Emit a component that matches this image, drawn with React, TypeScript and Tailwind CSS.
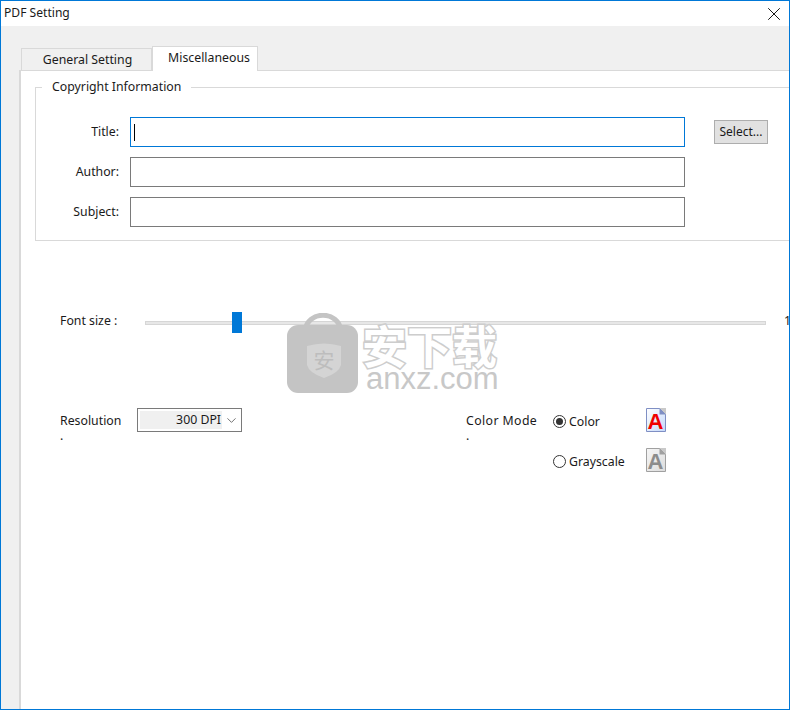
import { X, ChevronDown } from "lucide-react";

const uiFont = "font-['Noto_Sans','Noto_Sans_CJK_SC',sans-serif] text-[12.3px] text-[#1a1a1a]";

interface FieldRowProps {
  label: string;
  focused?: boolean;
}

function FieldRow({ label, focused }: FieldRowProps) {
  return (
    <div className="flex items-center">
      <span className="w-[73px] text-right">{label}</span>
      <div
        className={`ml-[11px] flex h-[30px] w-[555px] items-center border pl-[3px] ${
          focused ? "border-[#0078d7]" : "border-[#7a7a7a]"
        }`}
      >
        {focused && <div className="h-[17px] w-px bg-black" />}
      </div>
    </div>
  );
}

interface DocIconProps {
  id: string;
  color: string;
  border: string;
  from: string;
  to: string;
}

function DocIcon({ id, color, border, from, to }: DocIconProps) {
  return (
    <svg width="20" height="24" viewBox="0 0 20 24" className="shrink-0">
      <defs>
        <linearGradient id={id} x1="0" y1="0" x2="1" y2="1">
          <stop offset="0" stopColor={from} />
          <stop offset="1" stopColor={to} />
        </linearGradient>
      </defs>
      <rect x="13" y="0" width="7" height="7" fill="#c9c9c9" />
      <path d="M0.5 0.5H13.5L19.5 6.5V23.5H0.5Z" fill={`url(#${id})`} stroke={border} />
      <path d="M13.5 0.5V6.5H19.5Z" fill={border} />
      <text
        x="9.5"
        y="20.5"
        textAnchor="middle"
        fontSize="22"
        fontWeight="700"
        fontFamily="Liberation Sans, sans-serif"
        fill={color}
      >
        A
      </text>
    </svg>
  );
}

function Watermark() {
  return (
    <div className="pointer-events-none absolute left-[286px] top-[312px] flex">
      <svg width="71" height="80" viewBox="0 0 71 80" className="shrink-0">
        <path d="M18 18C20 -3 52 -3 54 18" fill="none" stroke="#c4c4c4" strokeWidth="5" />
        <rect x="0" y="12" width="71" height="68" rx="11" fill="#c4c4c4" />
        <path d="M20 33Q37 28 54 33V52Q52 60 37 65Q22 60 20 52Z" fill="#d4d4d4" />
        <text
          x="37"
          y="55"
          textAnchor="middle"
          fontSize="21"
          fontFamily="Noto Sans CJK SC, sans-serif"
          fill="#bdbdbd"
        >
          安
        </text>
      </svg>
      <div className="ml-[4px] flex flex-col items-start">
        <span className="mt-[8px] font-['Noto_Sans_CJK_SC',sans-serif] text-[45px] font-bold leading-[48px] text-white [-webkit-text-stroke:3px_#cdcdcd] [paint-order:stroke_fill]">
          安下载
        </span>
        <span className="ml-[4px] mt-[-6px] font-['Liberation_Sans',sans-serif] text-[31px] leading-[32px] text-[#c8c8c8]">
          anxz.com
        </span>
      </div>
    </div>
  );
}

export default function App() {
  return (
    <div className={`relative flex h-[710px] w-[790px] flex-col overflow-hidden border border-[#0078d7] bg-white ${uiFont}`}>
      <div className="flex h-[25px] shrink-0 items-center justify-between bg-white pl-[3px] pr-[4px]">
        <span className="text-[12.1px]">PDF Setting</span>
        <X size={22} strokeWidth={1} className="text-black" />
      </div>

      <div className="flex min-h-0 flex-1 flex-col bg-[#f0f0f0] pl-[18px]">
        <div className="flex h-[44px] shrink-0 items-end pl-[2px]">
          <div className="flex h-[22px] w-[131px] items-center justify-center border border-b-0 border-[#d9d9d9] bg-[#f0f0f0] pl-[2px] pt-[2px]">
            General Setting
          </div>
          <div className="z-10 mb-[-1px] flex h-[25px] w-[106px] items-center justify-center border border-b-0 border-[#d9d9d9] bg-white pb-[2px] pl-[8px]">
            Miscellaneous
          </div>
        </div>

        <div className="flex-1 border-l-2 border-t border-[#d9d9d9] bg-white pl-[14px] pt-[7px]">
          <fieldset className="mr-[-4px] h-[163px] border border-r-0 border-[#d9d9d9] pl-[6px]">
            <legend className="px-[10px] leading-[18px]">Copyright Information</legend>
            <div className="ml-[4px] flex">
              <div className="mt-[21px] flex flex-col gap-[10px]">
                <FieldRow label="Title:" focused />
                <FieldRow label="Author:" />
                <FieldRow label="Subject:" />
              </div>
              <button className="ml-[29px] mt-[24px] h-[24px] w-[54px] shrink-0 border border-[#adadad] bg-[#e1e1e1] text-[12px]">
                Select...
              </button>
            </div>
          </fieldset>

          <div className="mt-[71px] flex h-[22px] items-center pl-[25px]">
            <span className="w-[85px] shrink-0 pb-[4px]">Font size :</span>
            <div className="relative h-[4px] w-[621px] shrink-0 border border-[#d6d6d6] bg-[#e7e7e7]">
              <div className="absolute left-[86px] top-[-10px] h-[21px] w-[10px] bg-[#0078d7]" />
            </div>
            <span className="ml-[18px] shrink-0 pb-[4px]">1</span>
          </div>

          <div className="mt-[74px] flex items-start pl-[25px]">
            <span className="w-[70px] shrink-0 pt-[5px] leading-[15px]">
              Resolution
              <br />.
            </span>
            <div className="ml-[7px] flex h-[24px] w-[105px] shrink-0 items-center border border-[#7a7a7a] pl-[2px]">
              <span className="flex h-[18px] w-[82px] items-center justify-end bg-[#f0f0f0] pr-[1px]">300 DPI</span>
              <ChevronDown size={15} strokeWidth={1.1} className="ml-[2px] text-[#333]" />
            </div>

            <span className="ml-[224px] w-[87px] shrink-0 pt-[5px] leading-[15px] tracking-[0.4px]">
              Color Mode
              <br />.
            </span>
            <div className="flex flex-col gap-[16px]">
              <div className="flex h-[24px] items-center">
                <div className="mt-[2px] flex h-[13px] w-[13px] items-center justify-center rounded-full border border-[#333]">
                  <div className="h-[7px] w-[7px] rounded-full bg-[#333]" />
                </div>
                <span className="ml-[3px] w-[77px] pt-[4px]">Color</span>
                <DocIcon id="docColor" color="#f00000" border="#7f8fc4" from="#ffffff" to="#c4d8fa" />
              </div>
              <div className="flex h-[24px] items-center">
                <div className="mt-[2px] h-[13px] w-[13px] rounded-full border border-[#333]" />
                <span className="ml-[3px] w-[77px] pt-[4px]">Grayscale</span>
                <DocIcon id="docGray" color="#8c8c8c" border="#a0a0a0" from="#f6f6f6" to="#dcdcdc" />
              </div>
            </div>
          </div>
        </div>
      </div>

      <Watermark />
    </div>
  );
}
